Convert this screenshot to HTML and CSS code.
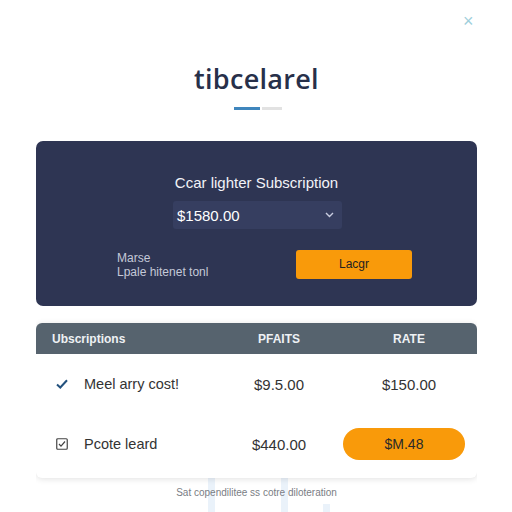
FILE: index.html
```html
<!DOCTYPE html>
<html lang="en">
<head>
  <meta charset="UTF-8">
  <title>Subscription</title>
  <link rel="stylesheet" href="styles.css">
</head>
<body>
  <div class="page">
    <span class="close">&times;</span>
    <span class="deco deco-1"></span>
    <span class="deco deco-2"></span>
    <span class="deco deco-3"></span>

    <div class="header">
      <h1>tibcelarel</h1>
      <div class="steps">
        <span class="step active"></span>
        <span class="step"></span>
      </div>
    </div>

    <div class="plan-card">
      <h2>Ccar lighter Subscription</h2>
      <div class="select">
        <span>$1580.00</span>
        <svg width="9" height="6" viewBox="0 0 9 6"><path d="M1 1l3.5 3.5L8 1" fill="none" stroke="#c9cde0" stroke-width="1.4"/></svg>
      </div>
      <div class="plan-bottom">
        <div class="plan-note">
          Marse<br>
          Lpale hitenet tonl
        </div>
        <a class="plan-btn" href="#">Lacgr</a>
      </div>
    </div>

    <div class="table-card">
      <div class="table-head">
        <div>Ubscriptions</div>
        <div class="center">PFAITS</div>
        <div class="center rate">RATE</div>
      </div>
      <div class="table-row">
        <div class="name">
          <svg width="12" height="10" viewBox="0 0 12 10"><path d="M1 5.5l3.3 3L11 1.2" fill="none" stroke="#24527e" stroke-width="2"/></svg>
          Meel arry cost!
        </div>
        <div class="center">$9.5.00</div>
        <div class="center rate">$150.00</div>
      </div>
      <div class="table-row">
        <div class="name">
          <svg width="12" height="12" viewBox="0 0 12 12"><rect x="0.75" y="0.75" width="10.5" height="10.5" rx="1" fill="none" stroke="#444" stroke-width="1.2"/><path d="M3 6l2 2.2L9 3.5" fill="none" stroke="#444" stroke-width="1.2"/></svg>
          Pcote leard
        </div>
        <div class="center">$440.00</div>
        <div class="center"><span class="pill">$M.48</span></div>
      </div>
    </div>

    <p class="footnote">Sat copendilitee ss cotre diloteration</p>
  </div>
</body>
</html>
```

FILE: styles.css
```css
body {
  margin: 0;
  background-color: #fff;
  font-family: "Liberation Sans", Arial, sans-serif;
  color: #333;
}

.page {
  position: relative;
  width: 441px;
  height: 512px;
  margin-left: 36px;
  overflow: hidden;
}

.close {
  position: absolute;
  top: 11px;
  left: 427px;
  font-size: 18px;
  color: #9fcfdc;
}

/* faint background bars at the bottom */
.deco {
  position: absolute;
  bottom: 0;
  width: 7px;
  background-color: #eaf2fa;
  z-index: -1;
}

.deco-1 {
  left: 172px;
  height: 34px;
}

.deco-2 {
  left: 245px;
  height: 34px;
}

.deco-3 {
  left: 287px;
  height: 8px;
}

.header {
  padding-top: 62px;
  text-align: center;
}

h1 {
  margin: 0;
  font-family: "Open Sans", sans-serif;
  font-weight: 600;
  font-size: 27px;
  line-height: 34px;
  color: #27304a;
  letter-spacing: 0.3px;
}

.steps {
  display: flex;
  justify-content: center;
  gap: 2px;
  margin-top: 11px;
  padding-left: 2px;
}

.step {
  width: 20px;
  height: 3px;
  background-color: #e2e2e2;
}

.step.active {
  width: 26px;
  background-color: #3f86bd;
}

/* dark subscription card */
.plan-card {
  margin-top: 31px;
  height: 165px;
  box-sizing: border-box;
  padding-top: 32px;
  background-color: #2e3553;
  border-radius: 7px;
  color: #fff;
}

.plan-card h2 {
  margin: 0;
  font-weight: normal;
  font-size: 15px;
  line-height: 20px;
  text-align: center;
  color: #f2f3f8;
}

.select {
  display: flex;
  justify-content: space-between;
  align-items: center;
  width: 169px;
  height: 28px;
  box-sizing: border-box;
  margin: 8px 0 0 137px;
  padding: 0 8px 0 4px;
  background-color: #363e60;
  border-radius: 3px;
  font-size: 15px;
}

.plan-bottom {
  display: flex;
  justify-content: space-between;
  align-items: center;
  margin-top: 21px;
  padding: 0 65px 0 81px;
}

.plan-note {
  font-size: 12px;
  line-height: 14px;
  color: #c5c9d8;
}

.plan-btn {
  display: block;
  width: 116px;
  height: 29px;
  line-height: 29px;
  text-align: center;
  background-color: #f99a0a;
  border-radius: 3px;
  color: #222;
  font-size: 12px;
  text-decoration: none;
}

/* table card */
.table-card {
  margin-top: 17px;
  padding-bottom: 4px;
  background-color: #fff;
  border-radius: 6px;
  overflow: hidden;
  box-shadow: 0 1px 6px rgba(0, 0, 0, 0.12);
}

.table-head,
.table-row {
  display: grid;
  grid-template-columns: 167px 120px 1fr;
  align-items: center;
  padding: 0 8px 0 16px;
}

.table-head {
  height: 31px;
  background-color: #56636e;
  color: #eef1f4;
  font-size: 12px;
  font-weight: bold;
}

.table-row {
  height: 60px;
  font-size: 15px;
  color: #333;
}

.center {
  text-align: center;
}

.rate {
  padding-left: 10px;
}

.name {
  display: flex;
  align-items: center;
  gap: 16px;
  padding-left: 4px;
  font-size: 14.5px;
}

.pill {
  display: inline-block;
  width: 122px;
  height: 32px;
  line-height: 32px;
  background-color: #f99a0a;
  border-radius: 16px;
  color: #2a2a2a;
  font-size: 14px;
}

.footnote {
  margin: 9px 0 0;
  text-align: center;
  font-size: 10px;
  color: #7a7d84;
}
```
